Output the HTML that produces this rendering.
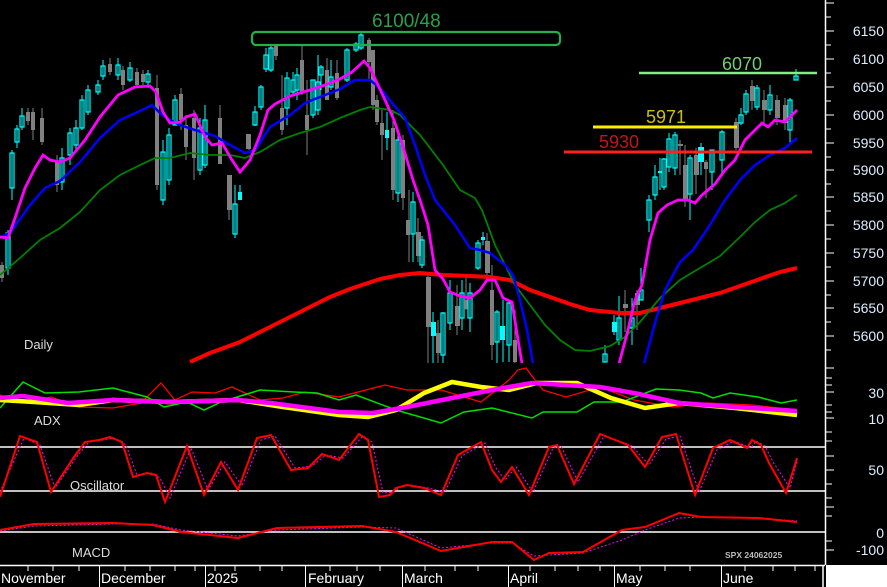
<!DOCTYPE html>
<html><head><meta charset="utf-8"><style>
html,body{margin:0;padding:0;background:#000;}
svg{display:block}
text{font-family:"Liberation Sans",sans-serif}
.c{fill:none;stroke:#00ffff;stroke-width:1.2}
.cf{fill:#00ffff}
.g{fill:#808080}
.wc{stroke:#00ffff;stroke-width:1}
.wg{stroke:#808080;stroke-width:1}
</style></head><body>
<svg width="887" height="587" viewBox="0 0 887 587" xmlns="http://www.w3.org/2000/svg">
<rect width="887" height="587" fill="#000"/>
<defs><clipPath id="pc"><rect x="0" y="0" width="825" height="363"/></clipPath></defs>
<g clip-path="url(#pc)">
<g id="candles">
<line class="wg" x1="2" y1="262" x2="2" y2="282"/><rect class="g" x="0" y="265" width="4" height="13"/>
<line class="wc" x1="8" y1="230" x2="8" y2="275"/><rect class="c" x="6" y="233" width="4" height="35"/>
<line class="wc" x1="12" y1="150" x2="12" y2="200"/><rect class="c" x="10" y="153" width="4" height="35"/>
<line class="wc" x1="17" y1="125" x2="17" y2="148"/><rect class="c" x="15" y="129" width="4" height="13"/>
<line class="wc" x1="22" y1="108" x2="22" y2="130"/><rect class="c" x="20" y="116" width="4" height="11"/>
<line class="wg" x1="28" y1="108" x2="28" y2="125"/><rect class="g" x="26" y="112" width="4" height="9"/>
<line class="wg" x1="33" y1="108" x2="33" y2="140"/><rect class="g" x="31" y="112" width="4" height="18"/>
<line class="wg" x1="42" y1="108" x2="42" y2="145"/><rect class="g" x="40" y="118" width="4" height="24"/>
<line class="wg" x1="57" y1="155" x2="57" y2="192"/><rect class="g" x="55" y="162" width="4" height="23"/>
<line class="wc" x1="62" y1="148" x2="62" y2="190"/><rect class="c" x="60" y="158" width="4" height="24"/>
<line class="wc" x1="70" y1="128" x2="70" y2="165"/><rect class="c" x="68" y="133" width="4" height="22"/>
<line class="wc" x1="76" y1="120" x2="76" y2="150"/><rect class="c" x="74" y="128" width="4" height="17"/>
<line class="wc" x1="82" y1="95" x2="82" y2="130"/><rect class="c" x="80" y="100" width="4" height="28"/>
<line class="wc" x1="88" y1="85" x2="88" y2="115"/><rect class="c" x="86" y="90" width="4" height="22"/>
<line class="wc" x1="98" y1="80" x2="98" y2="95"/><rect class="c" x="96" y="85" width="4" height="7"/>
<line class="wc" x1="103" y1="60" x2="103" y2="80"/><rect class="c" x="101" y="66" width="4" height="10"/>
<line class="wg" x1="110" y1="58" x2="110" y2="75"/><rect class="g" x="108" y="64" width="4" height="8"/>
<line class="wc" x1="118" y1="58" x2="118" y2="80"/><rect class="c" x="116" y="65" width="4" height="10"/>
<line class="wg" x1="123" y1="66" x2="123" y2="90"/><rect class="g" x="121" y="70" width="4" height="15"/>
<line class="wc" x1="130" y1="62" x2="130" y2="82"/><rect class="c" x="128" y="68" width="4" height="12"/>
<line class="wg" x1="137" y1="68" x2="137" y2="88"/><rect class="g" x="135" y="72" width="4" height="13"/>
<line class="wg" x1="143" y1="70" x2="143" y2="85"/><rect class="g" x="141" y="74" width="4" height="8"/>
<line class="wc" x1="148" y1="70" x2="148" y2="88"/><rect class="c" x="146" y="74" width="4" height="8"/>
<line class="wg" x1="157" y1="75" x2="157" y2="190"/><rect class="g" x="155" y="88" width="4" height="97"/>
<line class="wc" x1="163" y1="140" x2="163" y2="205"/><rect class="c" x="161" y="152" width="4" height="48"/>
<line class="wc" x1="169" y1="128" x2="169" y2="185"/><rect class="c" x="167" y="135" width="4" height="45"/>
<line class="wc" x1="175" y1="95" x2="175" y2="125"/><rect class="c" x="173" y="100" width="4" height="25"/>
<line class="wg" x1="181" y1="88" x2="181" y2="130"/><rect class="g" x="179" y="94" width="4" height="26"/>
<line class="wg" x1="186" y1="115" x2="186" y2="160"/><rect class="g" x="184" y="125" width="4" height="22"/>
<line class="wg" x1="194" y1="110" x2="194" y2="180"/><rect class="g" x="192" y="118" width="4" height="40"/>
<line class="wc" x1="200" y1="118" x2="200" y2="175"/><rect class="c" x="198" y="128" width="4" height="42"/>
<line class="wc" x1="205" y1="105" x2="205" y2="168"/><rect class="c" x="203" y="120" width="4" height="45"/>
<line class="wg" x1="220" y1="105" x2="220" y2="160"/><rect class="g" x="218" y="118" width="4" height="46"/>
<line class="wg" x1="229" y1="175" x2="229" y2="220"/><rect class="g" x="227" y="175" width="5" height="35"/>
<line class="wc" x1="235" y1="185" x2="235" y2="238"/><rect class="c" x="233" y="204" width="4" height="30"/>
<line class="wc" x1="240" y1="185" x2="240" y2="200"/><rect class="cf" x="238" y="192" width="4" height="8"/>
<line class="wg" x1="249" y1="134" x2="249" y2="150"/><rect class="g" x="246" y="134" width="5" height="15"/>
<line class="wc" x1="255" y1="106" x2="255" y2="126"/><rect class="c" x="253" y="112" width="4" height="13"/>
<line class="wc" x1="261" y1="85" x2="261" y2="110"/><rect class="c" x="259" y="87" width="4" height="20"/>
<line class="wc" x1="266" y1="48" x2="266" y2="72"/><rect class="c" x="264" y="55" width="4" height="14"/>
<line class="wc" x1="271" y1="45" x2="271" y2="72"/><rect class="c" x="269" y="48" width="4" height="22"/>
<line class="wg" x1="276" y1="44" x2="276" y2="60"/><rect class="g" x="274" y="44" width="4" height="12"/>
<line class="wg" x1="282" y1="75" x2="282" y2="135"/><rect class="g" x="280" y="108" width="4" height="22"/>
<line class="wc" x1="287" y1="72" x2="287" y2="125"/><rect class="c" x="285" y="78" width="4" height="30"/>
<line class="wc" x1="293" y1="72" x2="293" y2="95"/><rect class="c" x="291" y="80" width="4" height="12"/>
<line class="wc" x1="297" y1="68" x2="297" y2="100"/><rect class="c" x="295" y="75" width="4" height="15"/>
<line class="wg" x1="302" y1="45" x2="302" y2="95"/><rect class="g" x="300" y="60" width="4" height="32"/>
<line class="wg" x1="307" y1="80" x2="307" y2="155"/><rect class="g" x="305" y="115" width="4" height="15"/>
<line class="wc" x1="313" y1="80" x2="313" y2="118"/><rect class="c" x="311" y="80" width="4" height="35"/>
<line class="wc" x1="318" y1="55" x2="318" y2="115"/><rect class="c" x="316" y="82" width="4" height="28"/>
<line class="wc" x1="321" y1="65" x2="321" y2="90"/><rect class="c" x="319" y="67" width="4" height="8"/>
<line class="wg" x1="327" y1="58" x2="327" y2="100"/><rect class="g" x="325" y="70" width="4" height="30"/>
<line class="wc" x1="331" y1="60" x2="331" y2="90"/><rect class="c" x="329" y="77" width="4" height="10"/>
<line class="wg" x1="337" y1="60" x2="337" y2="100"/><rect class="g" x="335" y="73" width="4" height="25"/>
<line class="wc" x1="347" y1="48" x2="347" y2="82"/><rect class="c" x="345" y="50" width="4" height="30"/>
<line class="wc" x1="356" y1="42" x2="356" y2="52"/><rect class="c" x="354" y="44" width="4" height="6"/>
<line class="wc" x1="361" y1="33" x2="361" y2="50"/><rect class="c" x="359" y="35" width="4" height="13"/>
<line class="wg" x1="369" y1="38" x2="369" y2="80"/><rect class="g" x="367" y="40" width="4" height="22"/>
<line class="wg" x1="373" y1="50" x2="373" y2="110"/><rect class="g" x="371" y="50" width="4" height="55"/>
<line class="wg" x1="377" y1="95" x2="377" y2="125"/><rect class="g" x="375" y="100" width="4" height="22"/>
<line class="wg" x1="382" y1="110" x2="382" y2="160"/><rect class="g" x="380" y="123" width="4" height="12"/>
<line class="wc" x1="387" y1="112" x2="387" y2="150"/><rect class="cf" x="385" y="130" width="4" height="8"/>
<line class="wg" x1="393" y1="110" x2="393" y2="200"/><rect class="g" x="391" y="128" width="4" height="62"/>
<line class="wc" x1="398" y1="130" x2="398" y2="202"/><rect class="c" x="396" y="140" width="4" height="53"/>
<line class="wg" x1="403" y1="135" x2="403" y2="210"/><rect class="g" x="401" y="140" width="4" height="58"/>
<line class="wg" x1="409" y1="190" x2="409" y2="262"/><rect class="g" x="406" y="220" width="4" height="15"/>
<line class="wc" x1="413" y1="192" x2="413" y2="262"/><rect class="c" x="411" y="202" width="4" height="32"/>
<line class="wg" x1="418" y1="218" x2="418" y2="262"/><rect class="g" x="416" y="232" width="5" height="24"/>
<line class="wc" x1="422" y1="236" x2="422" y2="268"/><rect class="c" x="420" y="240" width="4" height="25"/>
<line class="wg" x1="428" y1="275" x2="428" y2="365"/><rect class="g" x="426" y="277" width="5" height="50"/>
<line class="wc" x1="433" y1="312" x2="433" y2="365"/><rect class="cf" x="431" y="322" width="5" height="14"/>
<line class="wg" x1="438" y1="320" x2="438" y2="365"/><rect class="g" x="436" y="333" width="5" height="20"/>
<line class="wc" x1="443" y1="312" x2="443" y2="365"/><rect class="c" x="441" y="313" width="4" height="42"/>
<line class="wc" x1="450" y1="280" x2="450" y2="330"/><rect class="c" x="448" y="293" width="4" height="30"/>
<line class="wg" x1="457" y1="285" x2="457" y2="335"/><rect class="g" x="455" y="306" width="5" height="20"/>
<line class="wc" x1="462" y1="280" x2="462" y2="330"/><rect class="c" x="460" y="293" width="4" height="25"/>
<line class="wg" x1="466" y1="275" x2="466" y2="310"/><rect class="g" x="464" y="300" width="4" height="9"/>
<line class="wc" x1="470" y1="283" x2="470" y2="332"/><rect class="c" x="468" y="293" width="4" height="25"/>
<line class="wc" x1="478" y1="240" x2="478" y2="270"/><rect class="c" x="476" y="243" width="4" height="25"/>
<line class="wc" x1="483" y1="232" x2="483" y2="245"/><rect class="cf" x="481" y="237" width="4" height="3"/>
<line class="wg" x1="487" y1="233" x2="487" y2="275"/><rect class="g" x="485" y="241" width="5" height="32"/>
<line class="wg" x1="492" y1="265" x2="492" y2="360"/><rect class="g" x="490" y="290" width="4" height="55"/>
<line class="wc" x1="497" y1="310" x2="497" y2="365"/><rect class="c" x="495" y="312" width="4" height="30"/>
<line class="wc" x1="503" y1="300" x2="503" y2="362"/><rect class="cf" x="500" y="326" width="5" height="14"/>
<line class="wc" x1="509" y1="300" x2="509" y2="362"/><rect class="c" x="507" y="303" width="4" height="42"/>
<line class="wg" x1="515" y1="310" x2="515" y2="365"/><rect class="g" x="513" y="340" width="4" height="22"/>
<line class="wc" x1="605" y1="345" x2="605" y2="362"/><rect class="c" x="603" y="354" width="4" height="8"/>
<line class="wc" x1="614" y1="315" x2="614" y2="335"/><rect class="cf" x="612" y="322" width="5" height="10"/>
<line class="wc" x1="619" y1="296" x2="619" y2="345"/><rect class="c" x="617" y="318" width="4" height="22"/>
<line class="wg" x1="625" y1="290" x2="625" y2="332"/><rect class="g" x="623" y="304" width="5" height="4"/>
<line class="wc" x1="632" y1="298" x2="632" y2="345"/><rect class="c" x="630" y="318" width="4" height="10"/>
<line class="wg" x1="637" y1="290" x2="637" y2="330"/><rect class="g" x="635" y="293" width="5" height="12"/>
<line class="wc" x1="641" y1="268" x2="641" y2="300"/><rect class="c" x="639" y="290" width="4" height="10"/>
<line class="wc" x1="649" y1="195" x2="649" y2="232"/><rect class="c" x="647" y="200" width="4" height="20"/>
<line class="wc" x1="655" y1="165" x2="655" y2="200"/><rect class="c" x="653" y="177" width="4" height="18"/>
<line class="wc" x1="660" y1="158" x2="660" y2="190"/><rect class="cf" x="658" y="171" width="4" height="2"/>
<line class="wc" x1="664" y1="158" x2="664" y2="190"/><rect class="c" x="662" y="159" width="4" height="28"/>
<line class="wc" x1="669" y1="133" x2="669" y2="172"/><rect class="c" x="667" y="139" width="4" height="28"/>
<line class="wc" x1="675" y1="132" x2="675" y2="175"/><rect class="c" x="673" y="135" width="4" height="33"/>
<line class="wg" x1="680" y1="140" x2="680" y2="175"/><rect class="g" x="678" y="144" width="5" height="2"/>
<line class="wg" x1="685" y1="145" x2="685" y2="207"/><rect class="g" x="683" y="165" width="5" height="35"/>
<line class="wc" x1="690" y1="155" x2="690" y2="220"/><rect class="c" x="688" y="158" width="4" height="36"/>
<line class="wg" x1="696" y1="148" x2="696" y2="194"/><rect class="g" x="694" y="155" width="5" height="20"/>
<line class="wc" x1="701" y1="143" x2="701" y2="175"/><rect class="cf" x="698" y="147" width="6" height="15"/>
<line class="wg" x1="706" y1="160" x2="706" y2="198"/><rect class="g" x="704" y="162" width="4" height="7"/>
<line class="wc" x1="712" y1="150" x2="712" y2="190"/><rect class="c" x="710" y="150" width="4" height="22"/>
<line class="wc" x1="722" y1="130" x2="722" y2="175"/><rect class="c" x="720" y="132" width="4" height="28"/>
<line class="wg" x1="736" y1="118" x2="736" y2="150"/><rect class="g" x="734" y="122" width="5" height="26"/>
<line class="wc" x1="741" y1="108" x2="741" y2="125"/><rect class="c" x="739" y="115" width="4" height="8"/>
<line class="wc" x1="746" y1="90" x2="746" y2="115"/><rect class="c" x="744" y="94" width="4" height="18"/>
<line class="wg" x1="752" y1="80" x2="752" y2="110"/><rect class="g" x="750" y="86" width="5" height="15"/>
<line class="wc" x1="757" y1="85" x2="757" y2="110"/><rect class="c" x="755" y="88" width="4" height="19"/>
<line class="wg" x1="764" y1="90" x2="764" y2="125"/><rect class="g" x="762" y="100" width="5" height="10"/>
<line class="wc" x1="770" y1="85" x2="770" y2="115"/><rect class="c" x="768" y="95" width="4" height="15"/>
<line class="wg" x1="777" y1="95" x2="777" y2="125"/><rect class="g" x="775" y="100" width="5" height="18"/>
<line class="wg" x1="785" y1="98" x2="785" y2="130"/><rect class="g" x="783" y="105" width="5" height="18"/>
<line class="wc" x1="790" y1="98" x2="790" y2="143"/><rect class="c" x="788" y="100" width="4" height="30"/>
<line class="wc" x1="796" y1="69" x2="796" y2="80"/><rect class="c" x="794" y="76" width="4" height="4"/>
</g>
<polyline fill="none" stroke="#ff0000" stroke-width="4" points="190,362 210,353 240,342 270,327 300,312 330,297 350,289 365,284 380,279 400,275 420,273 443,275 470,276 490,277 510,280 530,290 550,297 570,304 590,310 620,313 640,313 660,308 680,303 700,298 720,293 740,286 760,279 780,272 797,268"/>
<polyline fill="none" stroke="#008000" stroke-width="1.8" points="0,275 20,258 40,240 60,228 80,212 100,190 120,175 140,165 155,158 170,158 190,153 210,155 230,155 245,158 260,152 280,140 300,133 320,127 340,118 360,110 370,107 390,110 400,115 420,135 443,165 460,190 475,198 482,210 495,245 505,265 515,285 530,305 545,325 560,340 575,350 590,351 610,346 625,337 640,322 660,298 680,280 700,268 720,256 740,237 755,222 770,210 785,203 797,195"/>
<polyline fill="none" stroke="#0000ff" stroke-width="2.5" points="0,237 10,233 30,205 45,188 60,181 80,162 100,138 120,120 140,111 152,105 160,113 170,120 180,125 195,130 205,133 215,136 230,145 245,153 255,150 270,127 290,115 305,103 320,97 340,89 355,80 370,80 380,88 392,103 405,118 415,145 425,175 435,200 443,210 455,225 470,248 480,250 490,253 505,265 513,275 520,300 527,330 535,375"/>
<polyline fill="none" stroke="#0000ff" stroke-width="2.5" points="641,375 655,323 665,290 680,262 693,250 708,228 725,200 740,180 755,165 770,155 785,148 797,138"/>
<polyline fill="none" stroke="#ff00ff" stroke-width="2.8" points="0,237 8,238 15,218 25,188 35,168 43,155 50,160 60,162 70,158 85,140 100,117 118,95 135,87 150,86 156,92 163,112 170,123 180,122 186,117 195,114 205,137 212,145 222,143 232,160 240,172 250,160 260,135 268,110 275,104 290,96 300,93 310,90 322,86 340,79 352,72 364,61 370,68 378,85 385,100 394,120 404,150 413,180 420,200 428,225 435,270 443,279 450,292 460,296 470,298 480,290 487,280 495,280 503,298 512,302 518,340 524,375"/>
<polyline fill="none" stroke="#ff00ff" stroke-width="2.8" points="616,375 628,330 635,300 642,285 650,240 658,213 667,205 678,200 688,200 695,203 702,195 715,184 725,170 735,160 745,140 755,130 762,123 768,127 775,120 785,122 797,110"/>
</g>
<rect x="252" y="32" width="308" height="13" rx="4" fill="none" stroke="#22b04a" stroke-width="2.2"/>
<text x="372" y="27" fill="#2aa04a" font-size="19">6100/48</text>
<line x1="639" y1="73" x2="817" y2="73" stroke="#80f080" stroke-width="2.5"/>
<text x="722" y="70" fill="#70d070" font-size="18">6070</text>
<line x1="593" y1="127" x2="737" y2="127" stroke="#ffee00" stroke-width="3"/>
<text x="646" y="123" fill="#d0c000" font-size="18">5971</text>
<line x1="564" y1="152" x2="812" y2="152" stroke="#ff2020" stroke-width="3"/>
<text x="599" y="148" fill="#c01818" font-size="18">5930</text>
<text x="24" y="349" fill="#dddddd" font-size="13">Daily</text>

<!-- ADX -->
<polyline fill="none" stroke="#ff0000" stroke-width="1.3" points="0,395 23,403 51,397 79,407 113,408 141,403 161,383 175,400 192,392 215,393 232,387 260,400 283,398 305,392 339,397 385,385 407,390 441,390 481,402 509,380 518,370 526,368 535,380 543,390 566,397 600,387 634,400 673,407 707,403 752,405 797,410"/>
<polyline fill="none" stroke="#00e000" stroke-width="1.5" points="0,408 23,382 45,393 79,392 113,388 147,397 164,407 187,402 204,410 221,402 260,390 294,392 317,393 339,400 356,395 396,410 441,423 464,412 492,408 532,418 543,412 577,412 594,402 622,402 656,389 679,390 701,393 713,398 730,393 758,397 781,403 797,400"/>
<polyline fill="none" stroke="#ffff00" stroke-width="4.5" points="0,400 34,402 79,405 113,400 170,402 238,400 283,407 339,415 368,417 396,410 424,393 452,382 481,387 509,390 537,383 577,383 611,398 645,408 679,403 735,408 797,415"/>
<polyline fill="none" stroke="#ff00ff" stroke-width="4.5" points="0,398 23,396 68,403 113,400 170,402 238,400 271,403 339,412 373,413 407,407 452,398 492,390 532,383 600,387 639,394 679,403 735,407 797,411"/>
<text x="34" y="425" fill="#dddddd" font-size="13">ADX</text>

<!-- Oscillator -->
<line x1="0" y1="447" x2="825" y2="447" stroke="#fff" stroke-width="1.5"/>
<line x1="0" y1="491" x2="825" y2="491" stroke="#fff" stroke-width="1.5"/>
<polyline fill="none" stroke="#ff00ff" stroke-width="1" stroke-dasharray="2,2" points="0,492 24,438 40,445 55,488 78,455 89,442 103,440 114,438 126,445 137,475 151,473 160,478 170,498 191,448 208,490 225,462 242,486 261,440 275,436 295,468 312,466 326,455 343,458 363,436 372,442 383,493 394,492 400,487 411,485 428,488 445,492 462,456 485,443 496,468 505,480 516,467 533,492 553,448 561,446 578,482 604,436 632,446 649,465 666,439 680,436 699,492 717,450 734,441 751,448 756,441 765,446 773,462 790,488 797,462"/>
<polyline fill="none" stroke="#ff0000" stroke-width="2" points="0,497 20,436 37,442 51,492 74,457 85,442 99,440 110,437 122,442 133,477 147,473 156,475 165,502 187,446 204,495 221,462 238,490 257,438 271,435 291,470 308,468 322,454 339,460 359,434 368,440 379,497 390,495 396,488 407,485 424,488 441,495 458,455 481,442 492,470 501,482 512,467 529,495 549,447 557,445 574,484 600,434 628,445 645,467 662,437 676,434 695,495 713,448 730,440 747,448 752,440 761,445 769,463 786,493 797,458"/>
<text x="70" y="490" fill="#dddddd" font-size="13">Oscillator</text>

<!-- MACD -->
<line x1="0" y1="532" x2="825" y2="532" stroke="#fff" stroke-width="1.5"/>
<polyline fill="none" stroke="#ff00ff" stroke-width="1" stroke-dasharray="2,2" points="0,531 34,526 113,524 153,524 181,530 238,536 277,530 362,527 396,528 441,548 492,543 512,543 534,556 549,555 583,553 622,540 645,530 679,518 701,517 758,518 797,521"/>
<polyline fill="none" stroke="#ff0000" stroke-width="2" points="0,530 34,524 113,523 153,525 181,532 238,538 277,528 362,526 396,532 441,551 492,542 512,542 534,560 549,553 583,552 622,530 645,527 679,513 701,517 758,518 797,522"/>
<text x="72" y="557" fill="#dddddd" font-size="13">MACD</text>
<text x="725" y="558" fill="#bbbbbb" font-size="8.5" font-weight="bold">SPX 24062025</text>

<line x1="825.5" y1="0" x2="825.5" y2="565" stroke="#fff" stroke-width="1.5"/>
<g stroke="#fff" stroke-width="1">
<path d="M826 3h8M826 17h5M826 31h8M826 45h5M826 59h8M826 73h5M826 87h8M826 101h5M826 115h8M826 129h5M826 143h8M826 157h5M826 170h8M826 184h5M826 197h8M826 211h5M826 225h8M826 239h5M826 253h8M826 267h5M826 281h8M826 295h5M826 308h8M826 322h5M826 336h8M826 350h5"/>
<path d="M826 368h8M826 378h6M826 385h6M826 392h8M826 405h6M826 412h6M826 418h8M826 432h6M826 441h6M826 456h8M826 470h8M826 484h6M826 498h6M826 507h8M826 516h6M826 541h6M826 550h8"/>
</g>
<g fill="#ddeeff" font-size="14" text-anchor="end">
<text x="884" y="36">6150</text><text x="884" y="64">6100</text><text x="884" y="92">6050</text><text x="884" y="120">6000</text><text x="884" y="148">5950</text><text x="884" y="175">5900</text><text x="884" y="202">5850</text><text x="884" y="230">5800</text><text x="884" y="258">5750</text><text x="884" y="286">5700</text><text x="884" y="313">5650</text><text x="884" y="341">5600</text>
<text x="884" y="398">30</text><text x="884" y="424">10</text><text x="884" y="475">50</text><text x="884" y="538">0</text><text x="884" y="555">-100</text>
</g>

<line x1="0" y1="565.5" x2="825" y2="565.5" stroke="#fff" stroke-width="1.5"/>
<rect x="826" y="565" width="61" height="22" fill="#fff"/>
<line x1="823" y1="565" x2="823" y2="587" stroke="#fff" stroke-width="1.5"/>
<g stroke="#fff" stroke-width="1">
<path d="M99.5 565v22M205.5 565v22M305.5 565v22M402.5 565v22M508.5 565v22M614.5 565v22M721.5 565v22"/>
<path d="M28 565v6M53 565v6M79 565v6M125 565v6M150 565v6M175 565v6M195 565v6M215 565v6M235 565v6M260 565v6M282 565v6M330 565v6M357 565v6M380 565v6M425 565v6M455 565v6M478 565v6M530 565v6M555 565v6M578 565v6M600 565v6M640 565v6M665 565v6M690 565v6M745 565v6M773 565v6M795 565v6M815 565v6"/>
</g>
<g fill="#fff" font-size="14">
<text x="1" y="583">November</text><text x="101" y="583">December</text><text x="207" y="583">2025</text><text x="308" y="583">February</text><text x="404" y="583">March</text><text x="510" y="583">April</text><text x="616" y="583">May</text><text x="723" y="583">June</text>
</g>
</svg>
</body></html>
